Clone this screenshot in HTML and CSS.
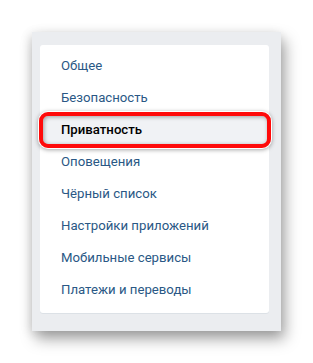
FILE: index.html
```html
<!DOCTYPE html>
<html lang="ru">
<head>
<meta charset="utf-8">
<link rel="stylesheet" href="styles.css">
</head>
<body>
<div class="panel">
  <ul class="menu">
    <li class="item">Общее</li>
    <li class="item">Безопасность</li>
    <li class="item active">Приватность</li>
    <li class="item">Оповещения</li>
    <li class="item">Чёрный список</li>
    <li class="item">Настройки приложений</li>
    <li class="item">Мобильные сервисы</li>
    <li class="item">Платежи и переводы</li>
  </ul>
</div>
</body>
</html>
```
FILE: styles.css
```css
html, body {
  margin: 0;
  padding: 0;
  background: #ffffff;
}
body {
  width: 313px;
  height: 363px;
  overflow: hidden;
  font-family: Roboto, "Open Sans", Arial, sans-serif;
}
.panel {
  margin: 32px 0 0 32px;
  width: 249px;
  height: 299px;
  box-sizing: border-box;
  background: #ebedf0;
  padding: 13px 12px 0 8px;
  box-shadow: 4px 8px 14px rgba(0, 0, 0, 0.35), -2px 2px 10px rgba(0, 0, 0, 0.12);
}
.menu {
  list-style: none;
  margin: 0;
  padding: 5px 0 7px 0;
  background: #ffffff;
  border-radius: 3px;
  box-shadow: 0 1px 0 #dce1e6;
}
.item {
  height: 32px;
  line-height: 32px;
  padding-left: 21px;
  font-size: 13.2px;
  color: #2a5885;
  position: relative;
}
.active {
  color: #000000;
  font-weight: 500;
  background: #f0f2f5;
}
.active::after {
  content: "";
  position: absolute;
  left: -1px;
  right: -2px;
  top: -2px;
  bottom: -2px;
  border: 4px solid #ff0a0a;
  border-radius: 9px;
  box-shadow: 0 0 0 1px #ffffff, 0 1px 4px 1px rgba(0, 0, 0, 0.35), inset 1px 1px 4px rgba(0, 0, 0, 0.35);
}
```
